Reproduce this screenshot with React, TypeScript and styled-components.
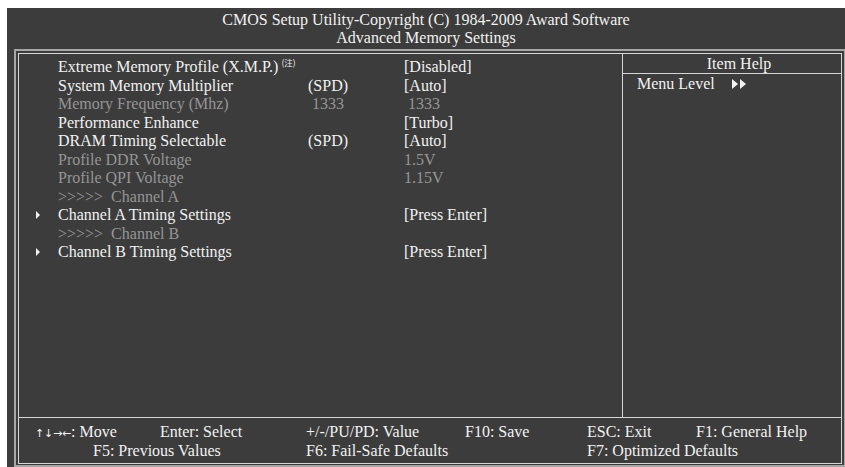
import { Fragment } from "react";
import styled, { createGlobalStyle } from "styled-components";

const GlobalStyle = createGlobalStyle`
  html, body {
    margin: 0;
    padding: 0;
    background: #ffffff;
    overflow: hidden;
  }
`;

const Page = styled.div`
  width: 845px;
  height: 467px;
  overflow: hidden;
  padding: 8px 0 0 7px;
  box-sizing: border-box;
  font-family: "Liberation Serif", "Times New Roman", serif;
  font-size: 16px;
  color: #f2f2f2;
`;

const Screen = styled.div`
  width: 845px;
  height: 470px;
  background: #3c3c3c;
  display: flex;
  flex-direction: column;
`;

const Title = styled.div`
  height: 41px;
  padding-top: 3px;
  box-sizing: border-box;
  text-align: center;
  line-height: 18px;
  margin-right: 7px;
`;

const OuterFrame = styled.div`
  margin-left: 7px;
  width: 832px;
  height: 418px;
  box-sizing: border-box;
  border: 2px solid #a6a6a6;
  padding: 2px;
`;

const InnerFrame = styled.div`
  width: 824px;
  height: 411px;
  box-sizing: border-box;
  border: 1px solid #d6d6d6;
  display: flex;
  flex-direction: column;
`;

const Body = styled.div`
  flex: 1;
  display: grid;
  grid-template-columns: 604px 1fr;
  border-bottom: 1px solid #d6d6d6;
`;

const MainList = styled.div`
  border-right: 1px solid #d6d6d6;
  padding-top: 4px;
`;

const Row = styled.div<{ $dim?: boolean }>`
  display: grid;
  grid-template-columns: 22px 250px 96px 1fr;
  padding-left: 17px;
  height: 18.5px;
  line-height: 18.5px;
  white-space: pre;
  color: ${(p) => (p.$dim ? "#959595" : "#f2f2f2")};
`;

const ArrowCell = styled.div`
  display: flex;
  align-items: center;
`;

const Triangle = styled.span<{ $w?: number; $h?: number }>`
  display: inline-block;
  width: 0;
  height: 0;
  border-top: ${(p) => (p.$h ?? 9) / 2}px solid transparent;
  border-bottom: ${(p) => (p.$h ?? 9) / 2}px solid transparent;
  border-left: ${(p) => p.$w ?? 4.5}px solid #f2f2f2;
`;

const Note = styled.sup`
  font-family: "Noto Sans CJK SC", sans-serif;
  font-size: 8.5px;
  vertical-align: 6px;
  line-height: 0;
  margin-left: 3px;
`;

const HelpPanel = styled.div`
  display: flex;
  flex-direction: column;
`;

const HelpHeader = styled.div`
  height: 19px;
  line-height: 19px;
  text-align: center;
  border-bottom: 1px solid #d6d6d6;
  padding-left: 14px;
`;

const HelpLine = styled.div`
  display: flex;
  align-items: center;
  padding-left: 14px;
  height: 20px;
`;

const HelpArrows = styled.span`
  display: inline-flex;
  gap: 2px;
  margin-left: 17px;
`;

const Footer = styled.div`
  height: 45px;
  padding: 4px 0 0 16px;
  box-sizing: border-box;
  display: grid;
  grid-template-columns: 58px 67px 146px 159px 122px 109px 1fr;
  grid-auto-rows: 19px;
  line-height: 19px;
  white-space: nowrap;
`;

const Key = styled.div<{ $col: number; $row: number }>`
  grid-column: ${(p) => p.$col} / span 1;
  grid-row: ${(p) => p.$row};
`;

const ArrowGlyph = styled.span`
  display: inline-block;
  width: 9px;
  text-align: center;
  font-family: "DejaVu Sans", sans-serif;
  font-size: 11px;
`;

type Item = {
  label: string;
  mid?: string;
  value?: string;
  dim?: boolean;
  sub?: boolean;
  note?: boolean;
};

const items: Item[] = [
  { label: "Extreme Memory Profile (X.M.P.)", value: "[Disabled]", note: true },
  { label: "System Memory Multiplier", mid: "(SPD)", value: "[Auto]" },
  { label: "Memory Frequency (Mhz)", mid: " 1333", value: " 1333", dim: true },
  { label: "Performance Enhance", value: "[Turbo]" },
  { label: "DRAM Timing Selectable", mid: "(SPD)", value: "[Auto]" },
  { label: "Profile DDR Voltage", value: "1.5V", dim: true },
  { label: "Profile QPI Voltage", value: "1.15V", dim: true },
  { label: ">>>>>  Channel A", dim: true },
  { label: "Channel A Timing Settings", value: "[Press Enter]", sub: true },
  { label: ">>>>>  Channel B", dim: true },
  { label: "Channel B Timing Settings", value: "[Press Enter]", sub: true },
];

const keys = [
  { text: ": Move", arrows: true, col: 1, row: 1 },
  { text: "Enter: Select", col: 3, row: 1 },
  { text: "+/-/PU/PD: Value", col: 4, row: 1 },
  { text: "F10: Save", col: 5, row: 1 },
  { text: "ESC: Exit", col: 6, row: 1 },
  { text: "F1: General Help", col: 7, row: 1 },
  { text: "F5: Previous Values", col: 2, row: 2 },
  { text: "F6: Fail-Safe Defaults", col: 4, row: 2 },
  { text: "F7: Optimized Defaults", col: 6, row: 2 },
];

const arrowChars = ["\u2191", "\u2193", "\u2192", "\u2190"];

export default function App() {
  return (
    <>
      <GlobalStyle />
      <Page>
        <Screen>
          <Title>
            CMOS Setup Utility-Copyright (C) 1984-2009 Award Software
            <br />
            Advanced Memory Settings
          </Title>
          <OuterFrame>
            <InnerFrame>
              <Body>
                <MainList>
                  {items.map((item) => (
                    <Row key={item.label} $dim={item.dim}>
                      <ArrowCell>{item.sub && <Triangle />}</ArrowCell>
                      <span>
                        {item.label}
                        {item.note && <Note>(注)</Note>}
                      </span>
                      <span>{item.mid}</span>
                      <span>{item.value}</span>
                    </Row>
                  ))}
                </MainList>
                <HelpPanel>
                  <HelpHeader>Item Help</HelpHeader>
                  <HelpLine>
                    Menu Level
                    <HelpArrows>
                      <Triangle $w={6} $h={10} />
                      <Triangle $w={6} $h={10} />
                    </HelpArrows>
                  </HelpLine>
                </HelpPanel>
              </Body>
              <Footer>
                {keys.map((k) => (
                  <Fragment key={k.text}>
                    <Key $col={k.col} $row={k.row}>
                      {k.arrows &&
                        arrowChars.map((c) => (
                          <ArrowGlyph key={c}>{c}</ArrowGlyph>
                        ))}
                      {k.text}
                    </Key>
                  </Fragment>
                ))}
              </Footer>
            </InnerFrame>
          </OuterFrame>
        </Screen>
      </Page>
    </>
  );
}
